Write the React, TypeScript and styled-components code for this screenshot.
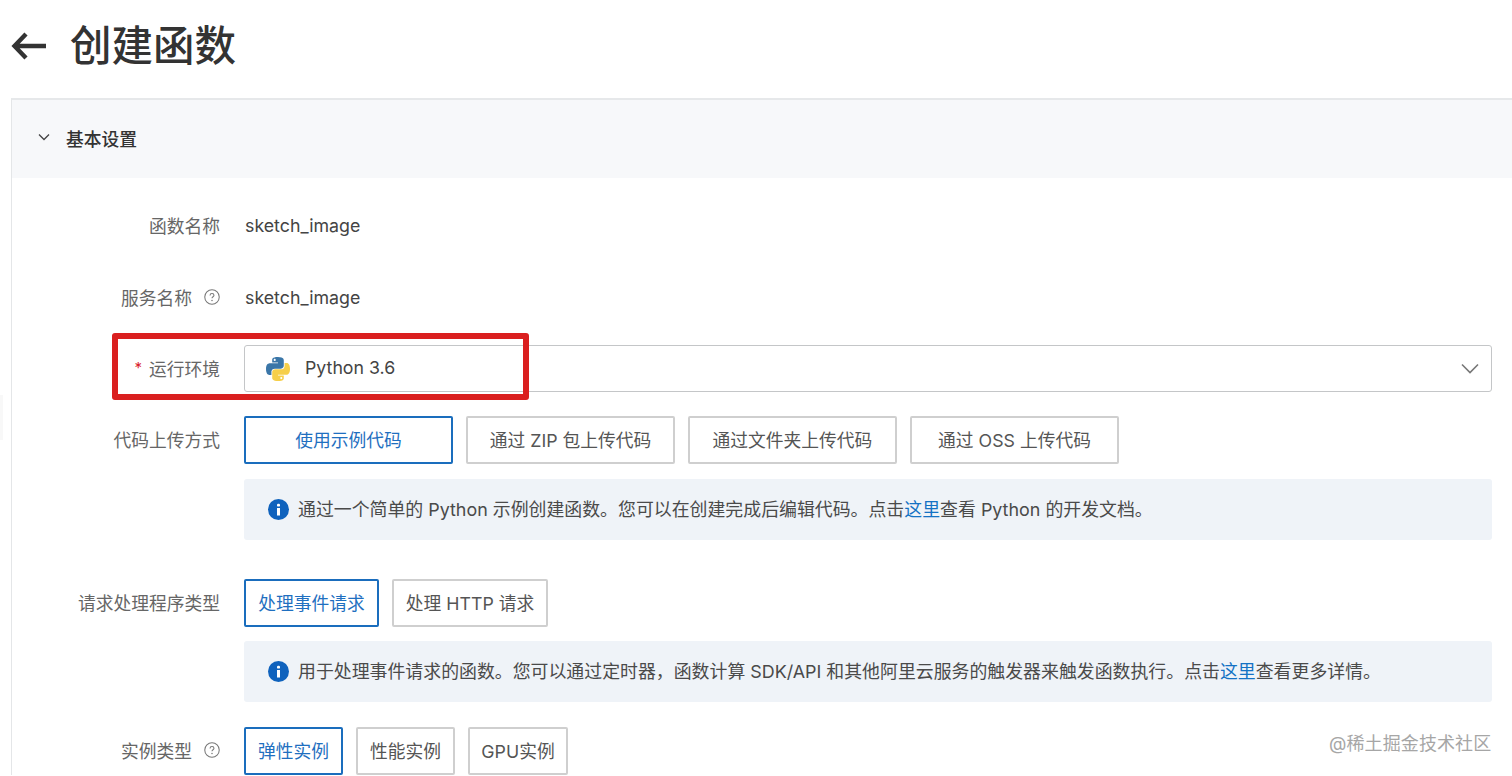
import React from "react";
import styled, { createGlobalStyle } from "styled-components";

const FONT = `Inter, "Noto Sans CJK SC", "Liberation Sans", sans-serif`;

const Global = createGlobalStyle`
  html, body { margin: 0; padding: 0; background: #fff; overflow: hidden; }
  body { font-family: ${FONT}; }
`;

const Page = styled.div`
  position: relative;
  width: 1512px;
  height: 776px;
  overflow: hidden;
  background: #fff;
  color: #333;
`;

const TitleBar = styled.header`
  display: flex;
  align-items: center;
  height: 98px;
  padding: 0 0 6px 11px;
  box-sizing: border-box;
`;

const BackIcon = styled.svg`
  width: 36px;
  height: 28px;
  flex: none;
`;

const Title = styled.h1`
  margin: 0 0 0 23px;
  font-size: 41.5px;
  line-height: 50px;
  font-weight: 500;
  color: #333;
  letter-spacing: 0;
`;

const Card = styled.section`
  margin-left: 11px;
  border-left: 1px solid #e4e6e8;
  border-top: 2px solid #e6e8ea;
`;

const CardHeader = styled.div`
  display: flex;
  align-items: center;
  height: 78px;
  padding: 0 0 3px 26px;
  box-sizing: border-box;
  background: #f7f8fa;
`;

const Chevron = styled.svg`
  width: 12px;
  height: 8px;
  flex: none;
  margin: -2px 16px 0 0;
`;

const CardTitle = styled.h2`
  margin: 0;
  font-size: 17.75px;
  font-weight: 500;
  color: #333;
`;

const Form = styled.div`
  display: flex;
  flex-direction: column;
  padding: 25px 20px 0 0;
`;

const Row = styled.div<{ $top?: number }>`
  display: grid;
  grid-template-columns: 208px 1fr;
  column-gap: 24px;
  align-items: center;
  margin-top: ${(p) => p.$top ?? 0}px;
  min-height: 47px;
`;

const Label = styled.label<{ $raised?: boolean }>`
  display: flex;
  justify-content: flex-end;
  align-items: center;
  padding-bottom: ${(p) => (p.$raised ? 4 : 2)}px;
  font-size: 17.75px;
  color: #666;
  white-space: nowrap;
`;

const Required = styled.span`
  color: #d9232d;
  margin-right: 7px;
  font-size: 15px;
  line-height: 1;
`;

const HelpIcon = styled.svg`
  width: 16px;
  height: 16px;
  margin-left: 12px;
  flex: none;
`;

const Value = styled.span`
  padding-bottom: 2px;
  padding-left: 1px;
  font-size: 17.8px;
  color: #444;
`;

const Select = styled.div`
  display: flex;
  align-items: center;
  height: 47px;
  box-sizing: border-box;
  padding: 0 12px 0 21px;
  border: 1.5px solid #c4c6c8;
  border-radius: 3px;
  font-size: 17.75px;
  color: #444;
`;

const PythonIcon = styled.svg`
  width: 24px;
  height: 24px;
  margin-right: 15px;
  flex: none;
`;

const SelectText = styled.span`
  flex: 1;
  padding-bottom: 2px;
`;

const Caret = styled.svg`
  width: 18px;
  height: 11px;
  flex: none;
`;

const Buttons = styled.div`
  display: flex;
  gap: 13px;
`;

const Option = styled.button<{ $active?: boolean; $w: number }>`
  width: ${(p) => p.$w}px;
  height: 48px;
  padding: 0 0 2px;
  box-sizing: border-box;
  background: #fff;
  border-radius: 2px;
  border: ${(p) => (p.$active ? "2px solid #1a6dbd" : "2px solid #cfcfcf")};
  color: ${(p) => (p.$active ? "#1f6fc0" : "#555")};
  font: 400 17.75px ${FONT};
  white-space: nowrap;
`;

const Info = styled.div<{ $top: number }>`
  display: flex;
  align-items: center;
  height: 61px;
  margin: ${(p) => p.$top}px 0 0 232px;
  padding-left: 24px;
  border-radius: 3px;
  background: #eff3f8;
  font-size: 17.9px;
  color: #4a4a4a;
  white-space: nowrap;
`;

const InfoText = styled.span`
  padding-bottom: 4px;
`;

const InfoIcon = styled.svg`
  width: 21px;
  height: 21px;
  margin-right: 9px;
  flex: none;
`;

const Link = styled.a`
  color: #1472c4;
`;

const Highlight = styled.div`
  position: absolute;
  left: 112px;
  top: 333px;
  width: 417px;
  height: 67px;
  box-sizing: border-box;
  border: 6px solid #da1f1f;
  border-radius: 3px;
  pointer-events: none;
`;

const EdgeHandle = styled.div`
  position: absolute;
  left: 0;
  top: 395px;
  width: 3px;
  height: 45px;
  background: #f8f8f8;
`;

const Watermark = styled.div`
  position: absolute;
  left: 1329px;
  top: 733px;
  font-size: 18px;
  line-height: 22px;
  color: #a6a6a6;
  letter-spacing: 0.1px;
  white-space: nowrap;
`;

const Help = () => (
  <HelpIcon viewBox="0 0 17 17" fill="none">
    <circle cx="8.5" cy="8.5" r="7.7" stroke="#777" strokeWidth="1.1" />
    <path d="M6.4 6.8c0-1.2 1-2 2.1-2s2.1.8 2.1 1.9c0 1.5-2.1 1.6-2.1 3.2" stroke="#777" strokeWidth="1.1" />
    <circle cx="8.5" cy="12.2" r=".8" fill="#777" />
  </HelpIcon>
);

const InfoGlyph = () => (
  <InfoIcon viewBox="0 0 21 21">
    <circle cx="10.5" cy="10.5" r="10.5" fill="#0f62bd" />
    <rect x="9" y="9" width="3" height="7.5" fill="#fff" />
    <rect x="9" y="4.8" width="3" height="2.8" rx="1.2" fill="#fff" />
  </InfoIcon>
);

export default function App() {
  return (
    <Page>
      <Global />
      <TitleBar>
        <BackIcon viewBox="0 0 36 28" fill="none">
          <path d="M35 14H3.5M15 2 3.5 14 15 26" stroke="#333" strokeWidth="4.4" />
        </BackIcon>
        <Title>创建函数</Title>
      </TitleBar>
      <Card>
        <CardHeader>
          <Chevron viewBox="0 0 12 8" fill="none">
            <path d="M1 1.5 6 6.5l5-5" stroke="#444" strokeWidth="1.3" />
          </Chevron>
          <CardTitle>基本设置</CardTitle>
        </CardHeader>
        <Form>
          <Row>
            <Label $raised>函数名称</Label>
            <Value>sketch_image</Value>
          </Row>
          <Row $top={25}>
            <Label $raised>
              服务名称
              <Help />
            </Label>
            <Value>sketch_image</Value>
          </Row>
          <Row $top={23}>
            <Label>
              <Required>*</Required>运行环境
            </Label>
            <Select>
              <PythonIcon viewBox="0 0 24 24">
                <path
                  fill="#3a76a8"
                  d="M11.914 0C5.82 0 6.2 2.656 6.2 2.656l.007 2.752h5.814v.826H3.9S0 5.789 0 11.969c0 6.18 3.403 5.96 3.403 5.96h2.03v-2.867s-.109-3.42 3.35-3.42h5.766s3.24.052 3.24-3.148V3.202S18.28 0 11.913 0zM8.708 1.85c.578 0 1.046.47 1.046 1.052 0 .581-.468 1.051-1.046 1.051-.579 0-1.046-.47-1.046-1.051 0-.582.467-1.052 1.046-1.052z"
                />
                <path
                  fill="#f6cf4a"
                  d="M12.087 24c6.092 0 5.712-2.656 5.712-2.656l-.007-2.752h-5.814v-.826h8.123s3.9.445 3.9-5.735c0-6.18-3.404-5.96-3.404-5.96h-2.03v2.867s.109 3.42-3.35 3.42H9.452s-3.24-.052-3.24 3.148v5.292S5.72 24 12.087 24zm3.206-1.85c-.578 0-1.046-.47-1.046-1.052 0-.581.468-1.051 1.046-1.051.579 0 1.046.47 1.046 1.051 0 .582-.467 1.052-1.046 1.052z"
                />
              </PythonIcon>
              <SelectText>Python 3.6</SelectText>
              <Caret viewBox="0 0 18 11" fill="none">
                <path d="M1 1.5 9 9.5l8-8" stroke="#777" strokeWidth="1.6" />
              </Caret>
            </Select>
          </Row>
          <Row $top={24}>
            <Label>代码上传方式</Label>
            <Buttons>
              <Option $active $w={209}>使用示例代码</Option>
              <Option $w={209}>通过 ZIP 包上传代码</Option>
              <Option $w={209}>通过文件夹上传代码</Option>
              <Option $w={209}>通过 OSS 上传代码</Option>
            </Buttons>
          </Row>
          <Info $top={15}>
            <InfoGlyph />
            <InfoText>
              通过一个简单的 Python 示例创建函数。您可以在创建完成后编辑代码。点击<Link>这里</Link>查看 Python 的开发文档。
            </InfoText>
          </Info>
          <Row $top={39}>
            <Label>请求处理程序类型</Label>
            <Buttons>
              <Option $active $w={135}>处理事件请求</Option>
              <Option $w={156}>处理 HTTP 请求</Option>
            </Buttons>
          </Row>
          <Info $top={14}>
            <InfoGlyph />
            <InfoText>
              用于处理事件请求的函数。您可以通过定时器，函数计算 SDK/API 和其他阿里云服务的触发器来触发函数执行。点击<Link>这里</Link>查看更多详情。
            </InfoText>
          </Info>
          <Row $top={25}>
            <Label>
              实例类型
              <Help />
            </Label>
            <Buttons>
              <Option $active $w={99}>弹性实例</Option>
              <Option $w={99}>性能实例</Option>
              <Option $w={100}>GPU实例</Option>
            </Buttons>
          </Row>
        </Form>
      </Card>
      <Highlight />
      <EdgeHandle />
      <Watermark>@稀土掘金技术社区</Watermark>
    </Page>
  );
}
